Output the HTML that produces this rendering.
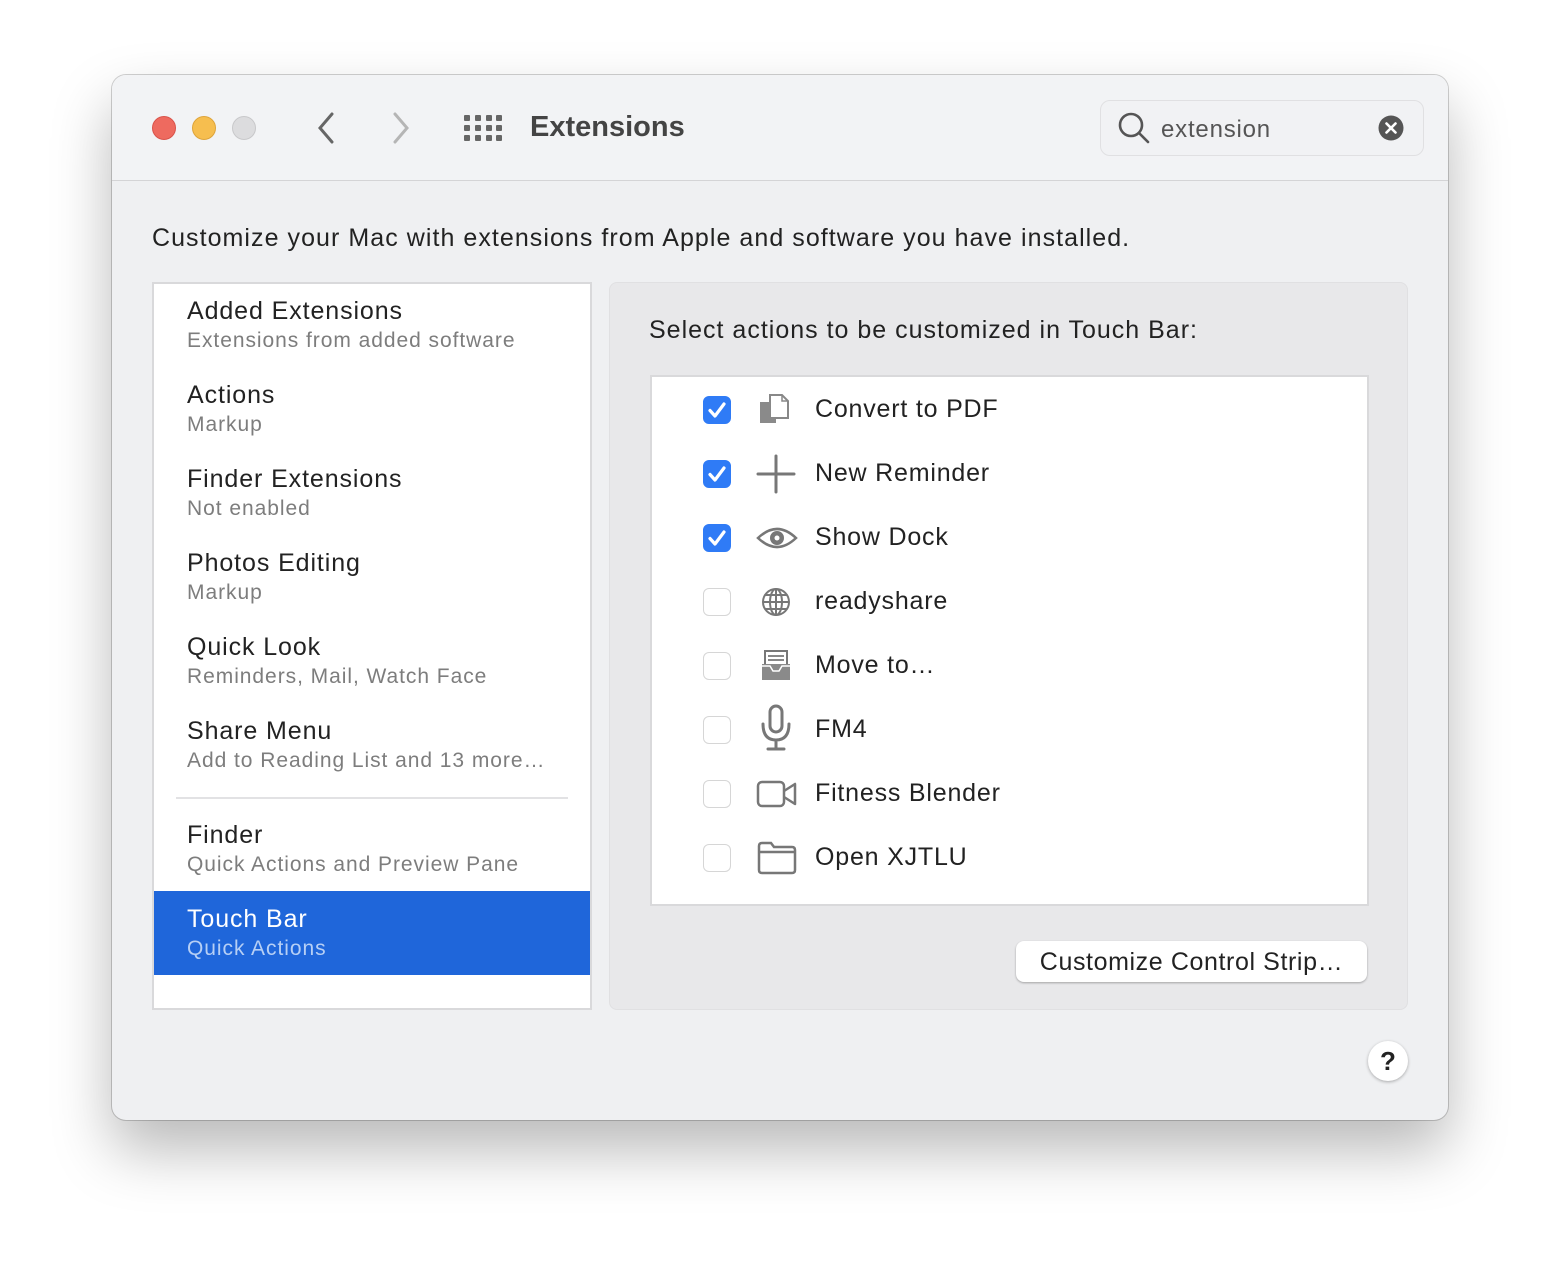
<!DOCTYPE html>
<html><head><meta charset="utf-8"><style>
*{box-sizing:border-box;margin:0;padding:0}
body{width:1560px;height:1268px;background:#fff;font-family:"Liberation Sans",sans-serif;position:relative;overflow:hidden}
.win{position:absolute;left:112px;top:75px;width:1336px;height:1045px;border-radius:14px;background:#eff0f2;box-shadow:0 30px 60px rgba(0,0,0,.28),0 0 0 1px rgba(0,0,0,.18);overflow:hidden}
.tb{position:absolute;left:0;top:0;width:100%;height:106px;background:#f2f3f5;border-bottom:1px solid #d4d4d6}
.dot{position:absolute;top:41px;width:24px;height:24px;border-radius:50%}
.abs{position:absolute}
.title{left:418px;top:36px;font-size:29px;font-weight:bold;color:#444}
.search{left:988px;top:25px;width:324px;height:56px;border:1.5px solid #e0e0e2;border-radius:10px;background:#f1f2f4}
.desc{left:40px;top:149px;font-size:25px;color:#222;letter-spacing:1.05px}
.list{left:40px;top:207px;width:440px;height:728px;background:#fff;border:2px solid #d9d9db}
.item{position:absolute;left:33px}
.item .t{font-size:25px;color:#222;line-height:30px;letter-spacing:.9px}
.item .s{font-size:21px;color:#7d7d7d;line-height:28px;letter-spacing:.95px;margin-top:1px}
.panel{left:497px;top:207px;width:799px;height:728px;background:#e8e8ea;border-radius:8px;border:1px solid #e0e0e2}
.inner{position:absolute;left:40px;top:92px;width:719px;height:531px;background:#fff;border:2px solid #d9d9db}
.row{position:absolute;left:0;height:40px;width:100%}
.cb{position:absolute;left:51px;top:6px;width:28px;height:28px;border-radius:6px;border:1.5px solid #d6d6d6;background:#fff}
.cb.on{background:#2f7bf6;border-color:#2f7bf6}
.row .ic{position:absolute;left:104px;top:0}
.row .l{position:absolute;left:163px;top:5px;font-size:25px;color:#222;letter-spacing:.8px}
</style></head><body>
<div class="win">
 <div class="tb">
  <div class="dot" style="left:40px;background:#ee6a5f;border:1px solid #d9534a"></div>
  <div class="dot" style="left:80px;background:#f6be4f;border:1px solid #dea43a"></div>
  <div class="dot" style="left:120px;background:#dcdcde;border:1px solid #c8c8ca"></div>
  <svg class="abs" style="left:200px;top:36px" width="30" height="34"><path d="M20 3 L8 17 L20 31" stroke="#666" stroke-width="3" fill="none" stroke-linecap="round"/></svg>
  <svg class="abs" style="left:273px;top:36px" width="30" height="34"><path d="M10 3 L22 17 L10 31" stroke="#b5b5b5" stroke-width="3" fill="none" stroke-linecap="round"/></svg>
  <svg class="abs" style="left:352px;top:40px" width="38" height="28" fill="#666">
   <rect x="0" y="0" width="6" height="6" rx="1"/><rect x="11" y="0" width="6" height="6" rx="1"/><rect x="22" y="0" width="6" height="6" rx="1"/><rect x="32" y="0" width="6" height="6" rx="1"/>
   <rect x="0" y="10" width="6" height="6" rx="1"/><rect x="11" y="10" width="6" height="6" rx="1"/><rect x="22" y="10" width="6" height="6" rx="1"/><rect x="32" y="10" width="6" height="6" rx="1"/>
   <rect x="0" y="20" width="6" height="6" rx="1"/><rect x="11" y="20" width="6" height="6" rx="1"/><rect x="22" y="20" width="6" height="6" rx="1"/><rect x="32" y="20" width="6" height="6" rx="1"/>
  </svg>
  <div class="abs title">Extensions</div>
  <div class="abs search">
   <svg class="abs" style="left:16px;top:10px" width="34" height="34"><circle cx="14" cy="14" r="11" stroke="#555" stroke-width="2.6" fill="none"/><path d="M22 22 L31 31" stroke="#555" stroke-width="2.6" stroke-linecap="round"/></svg>
   <div class="abs" style="left:60px;top:15px;font-size:24px;color:#555;letter-spacing:.8px">extension</div>
   <svg class="abs" style="left:277px;top:14px" width="26" height="26"><circle cx="13" cy="13" r="12.5" fill="#555"/><path d="M8.5 8.5 L17.5 17.5 M17.5 8.5 L8.5 17.5" stroke="#fff" stroke-width="2.6" stroke-linecap="round"/></svg>
  </div>
 </div>
 <div class="abs desc">Customize your Mac with extensions from Apple and software you have installed.</div>
 <div class="abs list">
  <div class="item" style="top:12px"><div class="t">Added Extensions</div><div class="s">Extensions from added software</div></div>
  <div class="item" style="top:96px"><div class="t">Actions</div><div class="s">Markup</div></div>
  <div class="item" style="top:180px"><div class="t">Finder Extensions</div><div class="s">Not enabled</div></div>
  <div class="item" style="top:264px"><div class="t">Photos Editing</div><div class="s">Markup</div></div>
  <div class="item" style="top:348px"><div class="t">Quick Look</div><div class="s">Reminders, Mail, Watch Face</div></div>
  <div class="item" style="top:432px"><div class="t">Share Menu</div><div class="s">Add to Reading List and 13 more…</div></div>
  <div class="abs" style="left:22px;top:513px;width:392px;height:2px;background:#e2e2e4"></div>
  <div class="item" style="top:536px"><div class="t">Finder</div><div class="s">Quick Actions and Preview Pane</div></div>
  <div class="abs" style="left:0;top:607px;width:436px;height:84px;background:#1f66da"></div>
  <div class="item" style="top:620px"><div class="t" style="color:#fff">Touch Bar</div><div class="s" style="color:#b6cff5">Quick Actions</div></div>
 </div>
 <div class="abs panel">
  <div class="abs" style="left:39px;top:33px;font-size:25px;color:#222;letter-spacing:1px">Select actions to be customized in Touch Bar:</div>
  <div class="inner">
   <div class="row" style="top:13px"><div class="cb on"><svg width="28" height="28" style="position:absolute;left:-1.5px;top:-1.5px"><path d="M7 14.5 L12 20 L21 8" stroke="#fff" stroke-width="3.2" fill="none" stroke-linecap="round" stroke-linejoin="round"/></svg></div>
    <svg class="ic" width="40" height="40"><path d="M14 5 H26 L32 11 V28 H14 Z" fill="#fff" stroke="#888" stroke-width="2"/><path d="M26 5 V11 H32" fill="none" stroke="#888" stroke-width="1.5"/><path d="M4 12 H14 V28 H20 V33 H4 Z" fill="#8a8a8a"/></svg>
    <div class="l">Convert to PDF</div></div>
   <div class="row" style="top:77px"><div class="cb on"><svg width="28" height="28" style="position:absolute;left:-1.5px;top:-1.5px"><path d="M7 14.5 L12 20 L21 8" stroke="#fff" stroke-width="3.2" fill="none" stroke-linecap="round" stroke-linejoin="round"/></svg></div>
    <svg class="ic" width="40" height="40"><path d="M20 2 V38 M2 20 H38" stroke="#777" stroke-width="3" stroke-linecap="round"/></svg>
    <div class="l">New Reminder</div></div>
   <div class="row" style="top:141px"><div class="cb on"><svg width="28" height="28" style="position:absolute;left:-1.5px;top:-1.5px"><path d="M7 14.5 L12 20 L21 8" stroke="#fff" stroke-width="3.2" fill="none" stroke-linecap="round" stroke-linejoin="round"/></svg></div>
    <svg class="ic" width="42" height="40"><path d="M2 20 Q21 2 40 20 Q21 38 2 20 Z" fill="none" stroke="#777" stroke-width="2.5"/><circle cx="21" cy="20" r="7" fill="#777"/><circle cx="21" cy="20" r="2.5" fill="#fff"/></svg>
    <div class="l">Show Dock</div></div>
   <div class="row" style="top:205px"><div class="cb"></div>
    <svg class="ic" width="40" height="40" fill="none" stroke="#777" stroke-width="2"><circle cx="20" cy="20" r="13"/><ellipse cx="20" cy="20" rx="6" ry="13"/><path d="M20 7 V33 M7 20 H33 M9 13 H31 M9 27 H31"/></svg>
    <div class="l">readyshare</div></div>
   <div class="row" style="top:269px"><div class="cb"></div>
    <svg class="ic" width="40" height="40"><path d="M9 5 H31 V20 H9 Z" fill="#fff" stroke="#777" stroke-width="2"/><path d="M12 10 H28 M12 14 H28" stroke="#777" stroke-width="1.8"/><path d="M6 18 H34 V34 H6 Z" fill="#8a8a8a"/><path d="M6 20 H14 L17 25 H23 L26 20 H34" stroke="#fff" stroke-width="1.5" fill="none"/></svg>
    <div class="l">Move to…</div></div>
   <div class="row" style="top:333px"><div class="cb"></div>
    <svg class="ic" width="40" height="50" style="top:-6px"><rect x="14" y="2" width="12" height="26" rx="6" fill="none" stroke="#777" stroke-width="3"/><path d="M7 20 Q7 36 20 36 Q33 36 33 20 M20 36 V44 M12 45 H28" fill="none" stroke="#777" stroke-width="3" stroke-linecap="round"/></svg>
    <div class="l">FM4</div></div>
   <div class="row" style="top:397px"><div class="cb"></div>
    <svg class="ic" width="42" height="40"><rect x="2" y="8" width="26" height="24" rx="4" fill="none" stroke="#777" stroke-width="2.5"/><path d="M28 17 L39 10 V30 L28 23" fill="none" stroke="#777" stroke-width="2.5" stroke-linejoin="round"/></svg>
    <div class="l">Fitness Blender</div></div>
   <div class="row" style="top:461px"><div class="cb"></div>
    <svg class="ic" width="42" height="40"><path d="M3 8 Q3 5 6 5 H15 L18 9 H36 Q39 9 39 12 V32 Q39 35 36 35 H6 Q3 35 3 32 Z M3 14 H39" fill="none" stroke="#777" stroke-width="2.5"/></svg>
    <div class="l">Open XJTLU</div></div>
  </div>
  <div class="abs" style="left:406px;top:658px;width:351px;height:41px;background:#fff;border-radius:8px;box-shadow:0 1px 2px rgba(0,0,0,.3);font-size:25px;color:#222;text-align:center;line-height:42px;letter-spacing:.6px">Customize Control Strip…</div>
 </div>
 <div class="abs" style="left:1256px;top:966px;width:40px;height:40px;border-radius:50%;background:#fff;box-shadow:0 1px 3px rgba(0,0,0,.3);font-size:26px;font-weight:bold;color:#222;text-align:center;line-height:40px">?</div>
</div>
</body></html>
